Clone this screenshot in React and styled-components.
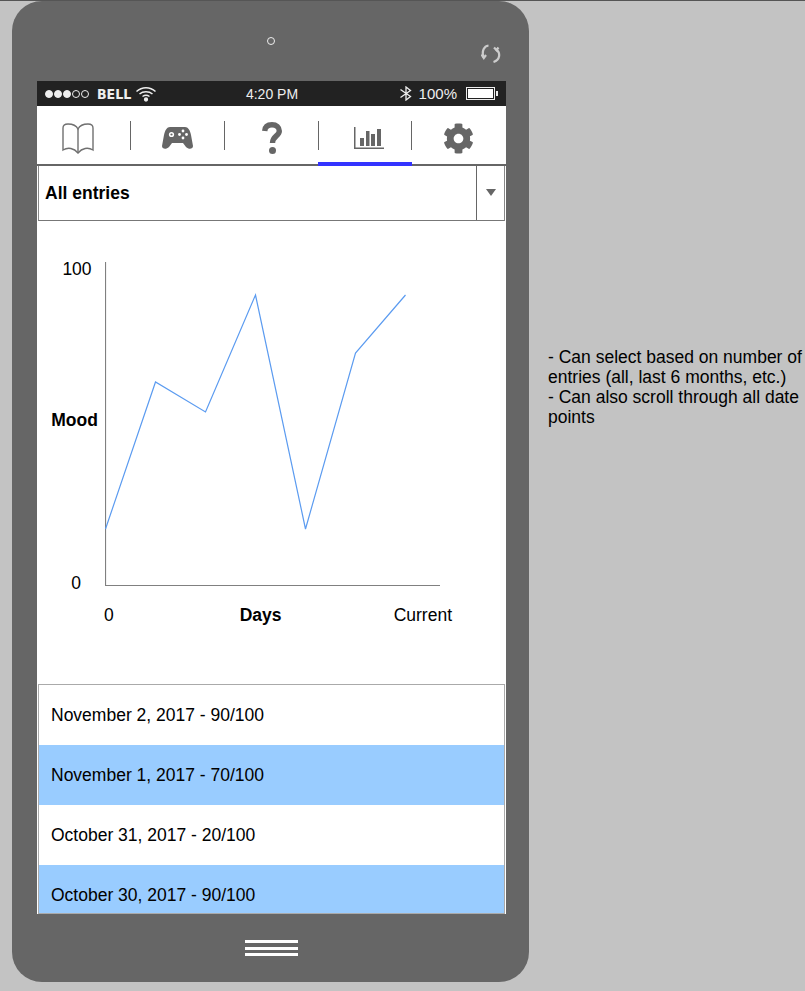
import React from "react";
import styled, { createGlobalStyle } from "styled-components";
import { FaCog } from "react-icons/fa";

const entries = [
  { label: "November 2, 2017 - 90/100" },
  { label: "November 1, 2017 - 70/100", active: true },
  { label: "October 31, 2017 - 20/100" },
  { label: "October 30, 2017 - 90/100", active: true },
];

const points = "0.5,267 50.5,120 100.5,150 150.5,33 200.5,267 250.5,91 300.5,33";

export default function App() {
  return (
    <Page>
      <GlobalStyle />
      <Phone>
        <Camera />
        <RotateIcon viewBox="0 0 20 20">
          <path d="M7.5 2.5 C3 3 0.5 8 2.5 14.5" />
          <path d="M0.5 11.5 L2.8 15 L5 12" />
          <path d="M15 6.5 C20 10 19 17 12.5 19" />
          <path d="M13 4.5 L15.5 7 L17.5 4.5" />
        </RotateIcon>
        <Screen>
          <StatusBar>
            <StatusGroup>
              <Signal>
                <Dot $on />
                <Dot $on />
                <Dot $on />
                <Dot />
                <Dot />
              </Signal>
              <Carrier>BELL</Carrier>
              <WifiIcon width="20" height="16" viewBox="0 0 20 16" fill="none" stroke="#eee" strokeWidth="1.5">
                <path d="M0.5 5.5 C6 0.5 14 0.5 19.5 5.5" />
                <path d="M3.5 8 C7 5 13 5 16.5 8" />
                <path d="M6.5 10.5 C8.5 9 11.5 9 13.5 10.5" />
                <circle cx="10" cy="13.5" r="1.4" fill="#eee" />
              </WifiIcon>
            </StatusGroup>
            <Clock>4:20 PM</Clock>
            <StatusGroup>
              <svg width="14" height="15" viewBox="0 0 14 15" fill="none" stroke="#eee" strokeWidth="1.3">
                <path d="M1.5 3.5 L11.5 10.5 L7 14 V1 L11.5 4.5 L1.5 11.5" />
              </svg>
              <Percent>100%</Percent>
              <Battery />
            </StatusGroup>
          </StatusBar>
          <Tabs>
            <Tab $nudge={-6}>
              <svg width="32" height="31" viewBox="0 0 32 31" fill="none" stroke="#707070" strokeWidth="1.4">
                <path d="M16 6 C14 2 10 1 6 1 C3 1 1 2 1 5 V27 C6 24 12 25 16 30 C20 25 26 24 31 27 V5 C31 2 29 1 26 1 C22 1 18 2 16 6 Z" />
                <path d="M16 6 V30" />
              </svg>
            </Tab>
            <Tab $nudge={-1}>
              <svg width="31" height="23" viewBox="0 0 31 23">
                <path
                  fill="#666"
                  d="M8 0 H23 C26 0 28 3 29 8 L31 19 C31 22 27 23 24 20 L21 16 H10 L7 20 C4 23 0 22 0 19 L2 8 C3 3 5 0 8 0 Z"
                />
                <circle cx="9.5" cy="7.5" r="2.6" fill="#fff" />
                <circle cx="9.5" cy="7.5" r="1.1" fill="#666" />
                <circle cx="21" cy="4" r="1.4" fill="#fff" />
                <circle cx="21" cy="11" r="1.4" fill="#fff" />
                <circle cx="17.5" cy="7.5" r="1.4" fill="#fff" />
                <circle cx="24.5" cy="7.5" r="1.4" fill="#fff" />
              </svg>
            </Tab>
            <Tab>
              <svg width="20" height="32" viewBox="0 0 20 32" fill="none" stroke="#666" strokeWidth="5.4">
                <path d="M2.7 9 C3 4.5 6 2.7 10 2.7 C14.5 2.7 17.3 5.2 17.3 9 C17.3 14 10.5 14 10.5 21" />
                <circle cx="10.5" cy="28.5" r="3.5" fill="#666" stroke="none" />
              </svg>
            </Tab>
            <Tab $active $nudge={3}>
              <svg width="30" height="22" viewBox="0 0 30 22" fill="#666">
                <path d="M0 0 H1.5 V20.5 H30 V22 H0 Z" />
                <rect x="6" y="11" width="4" height="8" />
                <rect x="12" y="4" width="3.5" height="15" />
                <rect x="17" y="7" width="4" height="12" />
                <rect x="23" y="2" width="4" height="17" />
              </svg>
            </Tab>
            <Tab $nudge={-1}>
              <FaCog size={31} color="#666" />
            </Tab>
          </Tabs>
          <Select>
            <SelectLabel>All entries</SelectLabel>
            <SelectArrow />
          </Select>
          <Chart>
            <YAxis>
              <HundredLabel>100</HundredLabel>
              <MoodLabel>Mood</MoodLabel>
              <span>0</span>
            </YAxis>
            <Plot viewBox="0 0 336 324">
              <path d="M0.5 0 V323.5 H335" fill="none" stroke="#808080" strokeWidth="1.2" />
              <polyline points={points} fill="none" stroke="#5b9bf0" strokeWidth="1.2" />
            </Plot>
            <XAxis>
              <span>0</span>
              <DaysLabel>Days</DaysLabel>
              <CurrentLabel>Current</CurrentLabel>
            </XAxis>
          </Chart>
          <List>
            {entries.map((e) => (
              <Row key={e.label} $active={e.active}>
                {e.label}
              </Row>
            ))}
          </List>
        </Screen>
        <HomeButton>
          <i />
          <i />
          <i />
        </HomeButton>
      </Phone>
      <Notes>
        - Can select based on number of entries (all, last 6 months, etc.)
        <br />
        - Can also scroll through all date points
      </Notes>
    </Page>
  );
}

const GlobalStyle = createGlobalStyle`
  html, body {
    margin: 0;
    padding: 0;
    background: #c3c3c3;
  }
  * {
    box-sizing: border-box;
  }
`;

const Page = styled.div`
  display: flex;
  align-items: flex-start;
  width: 805px;
  height: 991px;
  padding-left: 12px;
  border-top: 1px solid #555;
  overflow: hidden;
  font-family: "Liberation Sans", Arial, sans-serif;
  font-size: 17.5px;
  color: #000;
`;

const Phone = styled.div`
  position: relative;
  display: flex;
  flex-direction: column;
  align-items: center;
  flex: none;
  width: 517px;
  height: 981px;
  padding: 80px 0 0 2px;
  background: #666;
  border-radius: 30px;
`;

const Camera = styled.div`
  position: absolute;
  top: 36px;
  left: 255px;
  width: 8px;
  height: 8px;
  border: 1px solid #eee;
  border-radius: 50%;
`;

const RotateIcon = styled.svg`
  position: absolute;
  top: 42px;
  left: 469px;
  width: 20px;
  height: 20px;
  fill: none;
  stroke: #ccc;
  stroke-width: 2.2;
`;

const Screen = styled.div`
  display: flex;
  flex-direction: column;
  flex: none;
  width: 469px;
  height: 833px;
  background: #fff;
  overflow: hidden;
`;

const StatusBar = styled.div`
  display: flex;
  align-items: center;
  justify-content: space-between;
  flex: none;
  height: 25px;
  padding: 0 7px 0 8px;
  background: #222;
  color: #eee;
  font-size: 14px;
`;

const StatusGroup = styled.div`
  display: flex;
  align-items: center;
  gap: 6px;
  width: 108px;
  &:last-child {
    justify-content: flex-end;
  }
`;

const Signal = styled.div`
  display: flex;
  gap: 1px;
  margin-right: 2px;
`;

const Dot = styled.span`
  width: 8px;
  height: 8px;
  border-radius: 50%;
  border: 1px solid #eee;
  background: ${(p) => (p.$on ? "#eee" : "transparent")};
`;

const Carrier = styled.span`
  font-family: "DejaVu Sans Condensed", "Liberation Sans", sans-serif;
  font-stretch: condensed;
  font-weight: bold;
  font-size: 14px;
`;

const WifiIcon = styled.svg`
  flex: none;
  margin-left: -1px;
`;

const Clock = styled.span``;

const Percent = styled.span`
  margin-right: 3px;
  font-size: 15px;
`;

const Battery = styled.span`
  position: relative;
  width: 29px;
  height: 13px;
  margin-right: 4px;
  border: 1.5px solid #eee;
  background: #fff;
  box-shadow: inset 0 0 0 1px #222;
  &::after {
    content: "";
    position: absolute;
    top: 2.5px;
    right: -4px;
    width: 2px;
    height: 5px;
    background: #eee;
  }
`;

const Tabs = styled.div`
  display: grid;
  grid-template-columns: 94px 94px 94px 93px 94px;
  flex: none;
  height: 60px;
  border-bottom: 2px solid #666;
`;

const Tab = styled.div`
  position: relative;
  display: flex;
  align-items: center;
  justify-content: center;
  padding-top: 6px;
  svg {
    transform: translateX(${(p) => p.$nudge || 0}px);
  }
  &:not(:last-child)::after {
    content: "";
    position: absolute;
    top: 15px;
    right: 0;
    width: 1px;
    height: 29px;
    background: #666;
  }
  ${(p) =>
    p.$active &&
    `
    &::before {
      content: "";
      position: absolute;
      left: -1px;
      right: 0;
      bottom: -2px;
      height: 4px;
      background: #3333ff;
    }
  `}
`;

const Select = styled.div`
  display: flex;
  flex: none;
  align-items: stretch;
  height: 55px;
  margin: 0 1px;
  border: 1px solid #888;
  border-top: none;
  border-bottom-color: #777;
`;

const SelectLabel = styled.div`
  display: flex;
  flex: 1;
  align-items: center;
  padding: 0 0 0 6px;
  font-weight: bold;
`;

const SelectArrow = styled.div`
  position: relative;
  width: 28px;
  border-left: 1px solid #666;
  &::after {
    content: "";
    position: absolute;
    top: 23px;
    left: 9px;
    border-left: 5px solid transparent;
    border-right: 5px solid transparent;
    border-top: 7px solid #666;
  }
`;

const Chart = styled.div`
  display: grid;
  grid-template-columns: 50px 336px;
  grid-template-rows: 334px auto;
  column-gap: 4px;
  flex: none;
  height: 463px;
  padding: 38px 0 0 14px;
`;

const YAxis = styled.div`
  display: flex;
  flex-direction: column;
  align-items: center;
  height: 334px;
  line-height: 20px;
  span:last-child {
    margin-top: auto;
  }
`;

const HundredLabel = styled.span`
  margin-left: 2px;
`;

const MoodLabel = styled.span`
  margin: 131px 3px 0 0;
  font-weight: bold;
`;

const Plot = styled.svg`
  display: block;
  width: 336px;
  height: 324px;
  margin-top: 3px;
`;

const XAxis = styled.div`
  grid-column: 2;
  display: flex;
  width: 348px;
  margin: 12px 0 0 -1px;
  line-height: 20px;
`;

const DaysLabel = styled.span`
  margin-left: 126px;
  font-weight: bold;
`;

const CurrentLabel = styled.span`
  margin-left: auto;
`;

const List = styled.div`
  flex: 1;
  margin: 0 1px;
  border: 1px solid #aaa;
  overflow: hidden;
`;

const Row = styled.div`
  display: flex;
  align-items: center;
  flex: none;
  height: 60px;
  padding-left: 12px;
  background: ${(p) => (p.$active ? "#99ccff" : "#fff")};
`;

const HomeButton = styled.div`
  display: flex;
  flex-direction: column;
  gap: 3.5px;
  margin-top: 26px;
  i {
    display: block;
    width: 53px;
    height: 3px;
    background: #fff;
  }
`;

const Notes = styled.div`
  flex: none;
  width: 256px;
  margin: 346px 0 0 19px;
  line-height: 20px;
`;
